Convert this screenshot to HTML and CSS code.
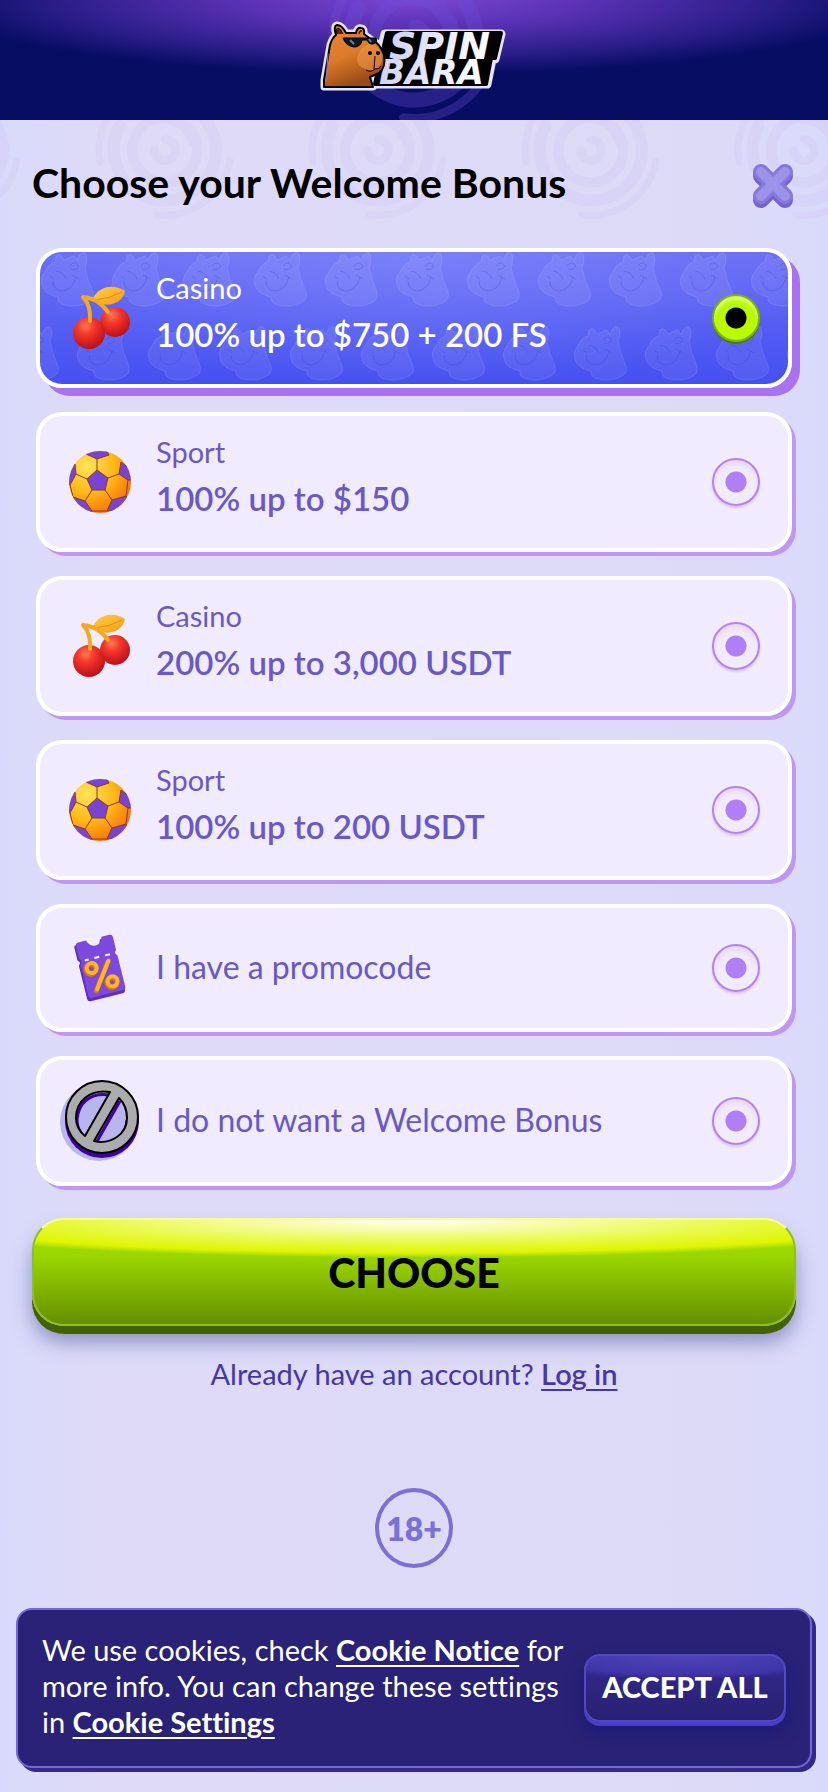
FILE: index.html
```html
<!DOCTYPE html>
<html lang="en">
<head>
  <meta charset="UTF-8" />
  <meta name="viewport" content="width=device-width, initial-scale=1.0" />
  <title>Spinbara - Welcome Bonus</title>
  <link rel="stylesheet" href="styles.css">
</head>
<body>

  <!-- shared shapes -->
  <svg class="defs" width="0" height="0" aria-hidden="true">
    <defs>
      <radialGradient id="red" cx="0.4" cy="0.28" r="0.75">
        <stop offset="0" stop-color="#ff7a55" />
        <stop offset="0.35" stop-color="#f5382c" />
        <stop offset="1" stop-color="#b90d16" />
      </radialGradient>
      <linearGradient id="leaf" x1="0" y1="0" x2="1" y2="1">
        <stop offset="0" stop-color="#ffd046" />
        <stop offset="1" stop-color="#f59a14" />
      </linearGradient>
      <radialGradient id="ballGold" cx="0.3" cy="0.25" r="0.85">
        <stop offset="0" stop-color="#ffe558" />
        <stop offset="0.5" stop-color="#ffb818" />
        <stop offset="1" stop-color="#f56a08" />
      </radialGradient>
      <clipPath id="ballClip"><circle cx="40" cy="40" r="31" /></clipPath>
      <symbol id="cherry" viewBox="0 0 80 80">
        <path d="M33 20C39 9 52 5 65 13C62 26 49 29 37 25Z" fill="url(#leaf)" />
        <path d="M35 22Q49 21 62 14" fill="none" stroke="#e58a12" stroke-width="1" />
        <circle cx="55" cy="44" r="15" fill="url(#red)" />
        <circle cx="29" cy="55" r="16" fill="url(#red)" />
        <path d="M23 19Q31 27 30 43M23 19Q38 20 48 34" fill="none" stroke="#f6a823" stroke-width="4" stroke-linecap="round" />
      </symbol>
      <symbol id="ball" viewBox="0 0 80 80">
        <circle cx="40" cy="40" r="31" fill="url(#ballGold)" />
        <g clip-path="url(#ballClip)" fill="#7a44d3" stroke="#8d3a1b" stroke-width="1">
          <path d="M37 28L48 36L45 48H32L27 37Z" />
          <path d="M26 12L37 17L49 13L46 7H28Z" />
          <path d="M7 25L15 22L16 32L10 43L5 43Z" />
          <path d="M61 20L70 27L73 38L68 38L59 32Z" />
          <path d="M13 55L25 59L32 69L24 74L10 62Z" />
          <path d="M52 58L66 54L69 58L60 68L47 69Z" />
          <path d="M37 28L37 17M48 36L59 32M45 48L52 58M32 48L25 59M27 37L16 32M10 43L13 55M68 38L66 54M32 69L47 69" fill="none" />
        </g>
      </symbol>
      <symbol id="swirl" viewBox="0 0 160 160">
        <g fill="none" stroke="currentColor" stroke-linecap="round">
          <path d="M80 68A12 12 0 1 1 68 80" stroke-width="10" />
          <path d="M106 54A37 37 0 1 1 58 50Q68 42 82 44A34 34 0 0 1 112 70" stroke-width="12" />
          <path d="M28 52A58 58 0 0 0 132 106A58 58 0 0 0 112 32" stroke-width="14" />
          <path d="M94 6A75 75 0 0 0 6 94" stroke-width="8" />
          <path d="M154 92A75 75 0 0 1 70 154" stroke-width="8" />
        </g>
      </symbol>
      <pattern id="heads" width="71" height="147" x="0" y="0" patternUnits="userSpaceOnUse">
        <g id="head" fill="#fff" fill-opacity="0.07" stroke="#fff" stroke-opacity="0.1" stroke-width="1">
          <path d="M5 20Q9 11 15 10L16 4Q20 0 24 8L31 5Q34 2 37 9Q40 -1 45 1Q49 6 45 15Q47 27 53 40Q55 48 47 51Q36 56 25 53Q17 51 18 45Q4 42 2 33Q0 25 5 20Z" />
          <path d="M13 29Q13 38 22 39Q33 38 36 25M32 23L39 27M10 24L14 27M16 19Q23 20 26 27M30 14Q34 8 39 14Q36 19 31 17" fill="none" stroke="#2b35c0" stroke-opacity="0.25" />
        </g>
        <use href="#head" x="36" y="74" />
        <use href="#head" x="-35" y="74" />
      </pattern>
    </defs>
  </svg>

  <header class="topbar">
    <svg class="topbar-swirl" viewBox="0 0 160 160" aria-hidden="true"><use href="#swirl" /></svg>
    <a class="logo" href="#" aria-label="Spinbara">
      <svg viewBox="0 0 190 74" width="190" height="74" aria-hidden="true">
        <defs>
          <linearGradient id="fur" x1="0" y1="0" x2="0.4" y2="1">
            <stop offset="0" stop-color="#e8862f" />
            <stop offset="0.55" stop-color="#dd7a2b" />
            <stop offset="1" stop-color="#9a4a15" />
          </linearGradient>
          <linearGradient id="letters" x1="0" y1="0" x2="1" y2="0">
            <stop offset="0" stop-color="#cfd3f4" />
            <stop offset="1" stop-color="#ffffff" />
          </linearGradient>
          <path id="bara" d="M5 67L5 60L11 25Q13 18 17 15Q14 6 18 5Q23 5 27 13L37 13Q38 7 42 8Q46 8 45 14L53 20Q61 23 65 35Q67 48 60 53L51 57L54 67Z" />
        </defs>
        <g stroke-linejoin="round">
          <path d="M66 14H182L176 39H173L168 64H54Z" fill="#e6e3fb" stroke="#e6e3fb" stroke-width="9" />
          <use href="#bara" fill="#e6e3fb" stroke="#e6e3fb" stroke-width="7" />
          <path d="M68 13H182L176 38H172L167 64H56Z" fill="#000" stroke="#000" stroke-width="4" />
          <g class="logo-word" fill="url(#letters)">
            <text x="70" y="39" font-size="38">SPIN</text>
            <text x="60" y="64" font-size="34">BARA</text>
          </g>
          <use href="#bara" fill="url(#fur)" stroke="#000" stroke-width="2" />
          <path d="M50 24Q63 26 63 40Q61 52 49 50Q37 47 38 37Q41 27 50 24Z" fill="#ee9447" fill-opacity="0.6" />
          <path d="M18 14Q16 9 19 8Q22 9 24 14M40 14Q40 10 43 11" fill="#5b2608" stroke="#000" stroke-width="1" />
          <path d="M24 18L57 18Q59 22 54 24Q50 25 48 20L43 20Q42 27 35 27Q27 26 24 18Z" fill="#101820" stroke="#000" stroke-width="1" />
          <path d="M31 20L35 24M50 19L52 22" stroke="#5f8898" stroke-width="2" />
          <path d="M56 36L55 49M47 50Q52 53 56 49Q60 50 62 46" fill="none" stroke="#000" stroke-width="1" />
          <circle cx="51" cy="33" r="2" /><circle cx="59" cy="33" r="2" />
          <path d="M9 34L7 62" stroke="#8f78ff" stroke-width="1" />
        </g>
      </svg>
    </a>
  </header>

  <main class="page">
    <div class="swirls" aria-hidden="true">
      <svg viewBox="0 0 160 160"><use href="#swirl" /></svg>
      <svg viewBox="0 0 160 160"><use href="#swirl" /></svg>
      <svg viewBox="0 0 160 160"><use href="#swirl" /></svg>
      <svg viewBox="0 0 160 160"><use href="#swirl" /></svg>
      <svg viewBox="0 0 160 160"><use href="#swirl" /></svg>
    </div>

    <form class="bonus-form">
      <div class="title-row">
        <h1>Choose your Welcome Bonus</h1>
        <button type="button" class="close-btn" aria-label="Close">
          <svg viewBox="0 0 42 46" width="42" height="46" fill="none" stroke-linecap="round">
            <path d="M9 13L33 37M33 13L9 37" stroke="#7662cf" stroke-width="16" />
            <path d="M9 9L33 33M33 9L9 33" stroke="#8577dc" stroke-width="16" />
            <path d="M9 9L33 33M33 9L9 33" stroke="#9c93e8" stroke-width="10" />
          </svg>
        </button>
      </div>

      <div class="bonus-list">
        <label class="bonus">
          <svg class="bonus-pattern" aria-hidden="true"><rect width="100%" height="100%" fill="url(#heads)" /></svg>
          <svg class="bonus-icon" viewBox="0 0 80 80" aria-hidden="true"><use href="#cherry" /></svg>
          <span class="bonus-text two-lines">
            <span class="bonus-type">Casino</span>
            <span class="bonus-value">100% up to $750 + 200 FS</span>
          </span>
          <input type="radio" name="bonus" value="casino" checked />
        </label>

        <label class="bonus">
          <svg class="bonus-icon" viewBox="0 0 80 80" aria-hidden="true"><use href="#ball" /></svg>
          <span class="bonus-text two-lines">
            <span class="bonus-type">Sport</span>
            <span class="bonus-value">100% up to $150</span>
          </span>
          <input type="radio" name="bonus" value="sport" />
        </label>

        <label class="bonus">
          <svg class="bonus-icon" viewBox="0 0 80 80" aria-hidden="true"><use href="#cherry" /></svg>
          <span class="bonus-text two-lines">
            <span class="bonus-type">Casino</span>
            <span class="bonus-value">200% up to 3,000 USDT</span>
          </span>
          <input type="radio" name="bonus" value="casino-usdt" />
        </label>

        <label class="bonus">
          <svg class="bonus-icon" viewBox="0 0 80 80" aria-hidden="true"><use href="#ball" /></svg>
          <span class="bonus-text two-lines">
            <span class="bonus-type">Sport</span>
            <span class="bonus-value">100% up to 200 USDT</span>
          </span>
          <input type="radio" name="bonus" value="sport-usdt" />
        </label>

        <label class="bonus">
          <svg class="bonus-icon" viewBox="0 0 80 80" aria-hidden="true">
            <g transform="rotate(-14 40 40)" stroke-linejoin="round">
              <path d="M22 12H31Q33 19 39 19Q45 19 47 12H56Q59 12 59 15V27L57 30L59 33V67Q59 70 56 70H23Q20 70 20 67V33L22 30L20 27V15Q20 12 22 12Z" fill="#5f2fc0" />
              <path d="M25 10H33Q35 17 41 17Q47 17 49 10H57Q60 10 60 13V26L58 29L60 32V64Q60 67 57 67H25Q22 67 22 64V32L24 29L22 26V13Q22 10 25 10Z" fill="#7d48de" />
              <path d="M27 29H31M37 29H42M48 29H53" stroke="#fff" stroke-width="2" />
              <g fill="none" stroke="#d9780b" stroke-width="5" stroke-linecap="round">
                <circle cx="31" cy="39" r="5" /><circle cx="48" cy="57" r="5" /><path d="M49 36L31 61" />
              </g>
              <g fill="none" stroke="#ffb622" stroke-width="4" stroke-linecap="round">
                <circle cx="32" cy="38" r="5" /><circle cx="49" cy="56" r="5" /><path d="M50 35L32 60" />
              </g>
            </g>
          </svg>
          <span class="bonus-text">I have a promocode</span>
          <input type="radio" name="bonus" value="promocode" />
        </label>

        <label class="bonus">
          <svg class="bonus-icon large" viewBox="0 0 80 82" aria-hidden="true">
            <circle cx="39" cy="42" r="39" fill="#b9b5ef" />
            <circle cx="42" cy="41" r="37" fill="#3d00a5" />
            <circle cx="42" cy="38" r="30" fill="#b9b5ef" />
            <path fill="none" stroke="#3d00a5" stroke-width="3" stroke-linejoin="round" d="M50 15C30 12 18 23 17 40C17 47 20 53 25 58ZM60 21L36 63C52 67 67 56 67 40" />
            <path fill-rule="evenodd" fill="#acacac" stroke="#000" stroke-width="2" stroke-linejoin="round" d="M42 1A36 36 0 1 1 42 73A36 36 0 1 1 42 1ZM50 12C30 9 16 21 16 38C16 45 20 52 25 56ZM59 18L34 61C51 65 67 54 67 38C67 30 64 23 59 18Z" />
          </svg>
          <span class="bonus-text">I do not want a Welcome Bonus</span>
          <input type="radio" name="bonus" value="none" />
        </label>
      </div>

      <button type="submit" class="choose-btn">CHOOSE</button>
      <p class="login-line">Already have an account? <a href="#">Log in</a></p>
    </form>

    <div class="age">18+</div>

    <section class="cookies">
      <p>We use cookies, check <a href="#">Cookie Notice</a> for more info. You can change these settings in <a href="#">Cookie Settings</a></p>
      <button type="button" class="accept-btn">ACCEPT ALL</button>
    </section>
  </main>

</body>
</html>
```
FILE: styles.css
```css
:root {
  --violet: #6858c8;
  --bg: #dddaf8;
  --lilac: #b57ff5;
}
* {
  box-sizing: border-box;
}
body {
  margin: 0;
  font-family: Lato, "Liberation Sans", sans-serif;
  font-variant-ligatures: none;
  background: var(--bg);
  color: #000;
}
.defs {
  position: absolute;
}
button {
  font-family: inherit;
  border: none;
  cursor: pointer;
}

/* header */
.topbar {
  position: relative;
  display: flex;
  justify-content: center;
  height: 120px;
  padding-top: 20px;
  overflow: hidden;
  background: radial-gradient(ellipse 58% 62% at 50% 0, #7a46d0 0%, #5a32b4 35%, #2a1d88 75%, #070d63 100%);
}
.topbar-swirl {
  position: absolute;
  top: -48px;
  left: calc(50% - 86px);
  width: 172px;
  height: 172px;
  color: rgba(110, 80, 220, 0.3);
}
.logo {
  position: relative;
}
.logo svg {
  display: block;
}
.logo-word {
  font-family: "DejaVu Sans", sans-serif;
  font-weight: bold;
  font-style: italic;
}

/* page */
.page {
  position: relative;
  display: flex;
  flex-direction: column;
  padding: 0 16px 24px;
  overflow: hidden;
  background: linear-gradient(90deg, #d9dafb 0%, #dedaf8 12%, #dddaf8 88%, #d9dafb 100%);
}
.swirls {
  position: absolute;
  top: 0;
  left: -118px;
  right: -46px;
  height: 100px;
  display: flex;
  justify-content: space-between;
  overflow: hidden;
  color: rgba(150, 120, 190, 0.05);
}
.swirls svg {
  width: 140px;
  height: 140px;
  margin-top: -40px;
}
.bonus-form {
  position: relative;
  padding: 0 16px;
}
.title-row {
  display: flex;
  align-items: center;
  justify-content: space-between;
  height: 128px;
}
h1 {
  margin: 0;
  padding-bottom: 4px;
  font-size: 41px;
  font-weight: 700;
}
.close-btn {
  padding: 4px 0 0;
  margin-right: 2px;
  background: none;
}
.close-btn svg {
  display: block;
}

/* bonus cards */
.bonus-list {
  display: flex;
  flex-direction: column;
  gap: 24px;
  padding: 0 4px;
}
.bonus {
  position: relative;
  display: flex;
  align-items: center;
  gap: 16px;
  min-height: 128px;
  padding: 20px 28px 20px 20px;
  border: 4px solid #fff;
  border-radius: 26px;
  background: #f0ebff;
  box-shadow: 4px 4px 0 #bd96f7;
  color: var(--violet);
  cursor: pointer;
}
.bonus:has(:checked) {
  background: radial-gradient(ellipse 60% 100% at 50% 0, rgba(150, 160, 255, 0.4), transparent), linear-gradient(#686cf5, #4550f0);
  box-shadow: 8px 8px 0 #a872f2;
  color: #fff;
}
.bonus-pattern {
  position: absolute;
  top: 0;
  left: 0;
  width: 100%;
  height: 100%;
  border-radius: 22px;
}
.bonus-icon {
  position: relative;
  flex: none;
  width: 80px;
  height: 80px;
}
.bonus-icon.large {
  height: 82px;
}
.bonus-text {
  position: relative;
  flex: 1;
  padding-bottom: 2px;
  font-size: 32px;
  line-height: 40px;
}
.two-lines {
  display: flex;
  flex-direction: column;
  gap: 8px;
  padding-bottom: 12px;
}
.bonus-type {
  font-size: 29px;
  line-height: 36px;
}
.bonus-value {
  font-size: 33px;
  line-height: 40px;
  font-weight: 600;
}
.bonus:has(.two-lines) {
  min-height: 140px;
  padding-top: 18px;
  padding-bottom: 18px;
}
.bonus input {
  position: relative;
  appearance: none;
  flex: none;
  width: 48px;
  height: 48px;
  margin: 0;
  border: 2px solid var(--lilac);
  border-radius: 50%;
  background: radial-gradient(circle, #b07ef6 0 10px, transparent 11px);
  box-shadow: inset 0 4px 4px #ecd6fb, 0 2px 2px #dcc4f8;
}
.bonus input:checked {
  border-color: #7fae10;
  background: radial-gradient(circle, #000 0 10px, #b8fb00 11px);
  box-shadow: inset 0 4px 3px #d9ff70, 0 2px 0 #4d7a10;
}

.choose-btn {
  display: block;
  width: 100%;
  height: 108px;
  margin-top: 32px;
  border: 2px solid #8fc01c;
  border-top-color: #f4ff9a;
  border-radius: 32px;
  background:
    radial-gradient(ellipse 72% 36% at 50% 0, #fffff4 0%, #f8fcb0 25%, #e6f93a 65%, #dff500 88%, transparent 100%),
    linear-gradient(#a4e000, #9ad600 35%, #659000);
  box-shadow: 0 8px 0 #436303, 0 16px 20px rgba(60, 70, 140, 0.5);
  color: #000;
  font-size: 41px;
  font-weight: 900;
}
.login-line {
  margin: 30px 0 0;
  text-align: center;
  font-size: 29px;
  line-height: 36px;
  color: #4636a8;
}
.login-line a {
  color: inherit;
  font-weight: 600;
  text-underline-offset: 4px;
}
.age {
  display: flex;
  align-items: center;
  justify-content: center;
  align-self: center;
  width: 78px;
  height: 80px;
  margin-top: 96px;
  border: 4px solid #7c6fd6;
  border-radius: 50%;
  color: #7c6fd6;
  font-size: 32px;
  font-weight: 800;
}

/* cookie banner */
.cookies {
  display: flex;
  align-items: center;
  gap: 16px;
  min-height: 160px;
  margin-top: 40px;
  padding: 0 24px;
  border: 2px solid #7468d8;
  border-radius: 16px;
  background: #292276;
  box-shadow: 4px 4px 0 #33288c;
  color: #fff;
}
.cookies p {
  flex: 1;
  margin: 0;
  padding-bottom: 4px;
  font-size: 29px;
  line-height: 36px;
}
.cookies a {
  color: #fff;
  font-weight: 700;
  text-underline-offset: 4px;
}
.accept-btn {
  width: 202px;
  height: 68px;
  padding: 0 0 4px;
  border: 2px solid #5548c4;
  border-radius: 16px;
  background:
    radial-gradient(ellipse 90% 36% at 50% 0, #5043bb 0%, #4034a8 80%, transparent 100%),
    linear-gradient(#33298f, #282171);
  box-shadow: 0 4px 0 #4a3ec9, 0 10px 16px rgba(25, 25, 120, 0.8);
  color: #fff;
  font-size: 29px;
  font-weight: 900;
}
```
